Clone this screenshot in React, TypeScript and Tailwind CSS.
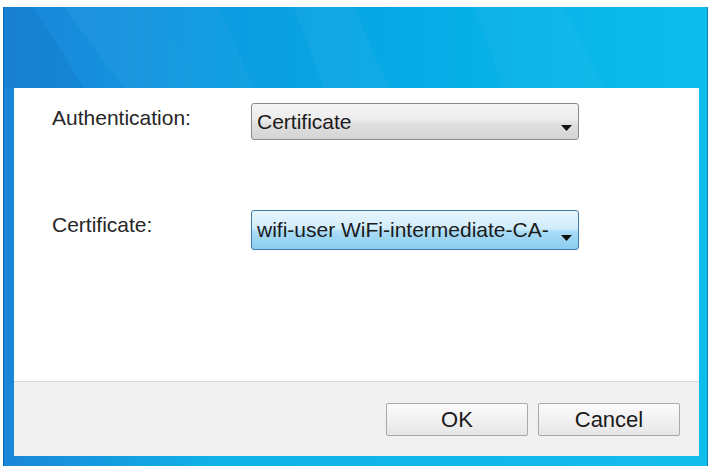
import { ReactNode } from "react";

const font = { fontFamily: '"Liberation Sans", Arial, sans-serif' };

// small black triangle used by the combo boxes
const Caret = () => (
    <svg width="11" height="6" viewBox="0 0 11 6" className="shrink-0">
        <path d="M0 0 H11 L5.5 6 Z" fill="#111" />
    </svg>
);

const Combo = ({ value, focused, height }: { value: string; focused?: boolean; height: string }) => {
    const skin = focused
        ? "border-[#3d7bad] bg-[linear-gradient(to_bottom,#e6f5fd_0%,#d2edfb_45%,#a9dbf6_55%,#8ccdf0_100%)]"
        : "border-[#8a8a8a] bg-[linear-gradient(to_bottom,#f5f5f5_0%,#ececec_45%,#e0e0e0_55%,#d4d4d4_100%)]";
    return (
        <div className={`flex w-[328px] ${height} items-center justify-between rounded-[3px] border pl-[5px] pr-[6px] ${skin}`}>
            <span className="text-[21px] leading-[24px] text-[#1b1b1b] whitespace-nowrap">{value}</span>
            <div className="self-end pb-[8px]">
                <Caret />
            </div>
        </div>
    );
};

const Row = ({ label, children }: { label: string; children: ReactNode }) => (
    <div className="flex items-start">
        <span className="w-[199px] pt-[3px] text-[21px] leading-[24px] text-[#262626]">{label}</span>
        {children}
    </div>
);

const DialogButton = ({ children }: { children: ReactNode }) => (
    <button className="flex h-[33px] w-[142px] items-center justify-center rounded-[2px] border border-[#a9a9a9] bg-[linear-gradient(to_bottom,#fbfbfb_0%,#f1f1f1_50%,#e6e6e6_100%)] text-[22px] leading-none text-[#1a1a1a]">
        {children}
    </button>
);

// aero glass streaks across the caption area
const Streaks = () => (
    <svg width="705" height="81" viewBox="0 0 705 81" className="block">
        <polygon points="0,0 30,0 80,81 0,81" fill="#0b4fa6" opacity="0.12" />
        <polygon points="60,0 150,0 200,81 120,81" fill="#ffffff" opacity="0.04" />
        <polygon points="150,0 215,0 250,81 200,81" fill="#ffffff" opacity="0.03" />
        <polygon points="290,0 350,0 385,81 320,81" fill="#ffffff" opacity="0.04" />
        <polygon points="470,0 560,0 600,81 500,81" fill="#ffffff" opacity="0.03" />
    </svg>
);

export default function App() {
    return (
        <div className="h-[467px] w-[712px] bg-white pb-[1px] pl-[3px] pr-[4px] pt-[7px]" style={font}>
            <div className="flex h-full flex-col border-l border-r border-l-[#0d62b4] border-r-[#0e7fb8] bg-[linear-gradient(to_right,#1c86d9_0%,#0c9be1_30%,#05ace6_60%,#0dbeec_100%)]">
                <Streaks />
                <div className="ml-[10px] mr-[8px] flex flex-col bg-white">
                    <div className="flex h-[293px] flex-col pl-[38px] pt-[15px]">
                        <Row label="Authentication:">
                            <Combo value="Certificate" height="h-[37px]" />
                        </Row>
                        <div className="h-[70px]" />
                        <Row label="Certificate:">
                            <Combo value="wifi-user WiFi-intermediate-CA-" height="h-[40px]" focused />
                        </Row>
                    </div>
                    <div className="h-px bg-[#d6d6d6]" />
                    <div className="flex h-[74px] justify-end gap-[10px] bg-[#f1f1f1] pr-[19px] pt-[21px]">
                        <DialogButton>OK</DialogButton>
                        <DialogButton>Cancel</DialogButton>
                    </div>
                </div>
                <div className="flex-1 bg-[linear-gradient(to_right,#1a86d8_0%,#10b2e8_30%,#12bdec_100%)]" />
            </div>
        </div>
    );
}
